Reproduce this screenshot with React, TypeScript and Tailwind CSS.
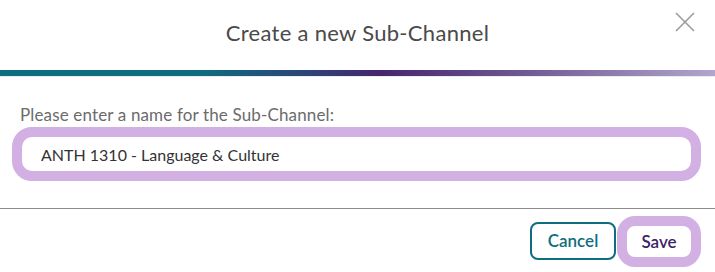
import { useState } from "react";

export default function App() {
  const [name, setName] = useState("ANTH 1310 - Language & Culture");

  return (
    <div className="w-[715px] h-[272px] bg-white font-['Lato','Liberation_Sans',sans-serif]">
      {/* Header */}
      <div className="relative flex h-[70px] items-center justify-center">
        <h2 className="text-[22px] leading-none tracking-[0.3px] text-[#4a4a4a] pb-[4px]">Create a new Sub-Channel</h2>
        <button className="absolute right-[20px] top-[12px] h-[20px] w-[20px]" aria-label="Close">
          <svg width="20" height="20" viewBox="0 0 20 20" fill="none" stroke="#9b9b9b" strokeWidth="1.6">
            <path d="M1 1 L19 19 M19 1 L1 19" />
          </svg>
        </button>
      </div>
      <div className="h-[6px] bg-[linear-gradient(90deg,#0c6e80_0%,#0e6c80_28%,#2c4677_42%,#45266e_53%,#6c5590_72%,#b3a5cd_100%)]" />
      <div className="h-px bg-[#ececec]" />

      {/* Body */}
      <div className="px-[12px] pt-[28px]">
        <label className="block pl-[8px] text-[17px] leading-[20px] tracking-[0.15px] text-[#6b6b6b] mb-[2px]">
          Please enter a name for the Sub-Channel:
        </label>
        <input
          value={name}
          onChange={(e) => setName(e.target.value)}
          className="block h-[54px] w-[689px] rounded-[20px] border-[10px] border-[#d2b0e3] bg-white pl-[19px] text-[16px] text-[#333333] outline-none"
        />
      </div>

      <div className="mt-[27px] h-px bg-[#8c8c8c]" />

      {/* Footer */}
      <div className="flex items-center justify-end gap-[1px] pr-[14px] pt-[7px]">
        <button className="mt-[-2px] h-[38px] w-[86px] rounded-[8px] border-2 border-[#0e6e80] text-[17px] font-semibold text-[#0e6e80]">
          Cancel
        </button>
        <button className="h-[51px] w-[84px] rounded-[18px] border-[10px] border-[#d2b0e3] bg-white text-[17px] font-semibold text-[#3b2466]">
          Save
        </button>
      </div>
    </div>
  );
}
